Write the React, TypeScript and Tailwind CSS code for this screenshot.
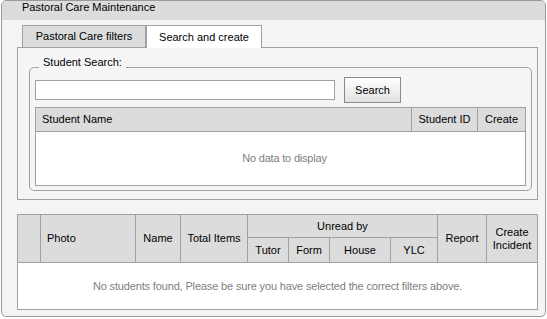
export default function App() {
  return (
    <div className="h-[319px] w-[547px] bg-white font-['Liberation_Sans',Arial,sans-serif] text-[11px] text-black">
      <div className="ml-px flex h-[317px] w-[545px] flex-col overflow-hidden rounded-[5px] border border-[#9a9a9a] bg-[#f4f4f4]">
        <div className="h-[19px] shrink-0 bg-[#dcdcdc] pl-[20px] leading-[13px]">Pastoral Care Maintenance</div>

        <div className="mt-[5px] flex items-end pl-[20px]">
          <div className="flex h-[22px] w-[124px] items-center justify-center border border-b-0 border-[#a0a0a0] bg-[#dcdcdc]">
            Pastoral Care filters
          </div>
          <div className="relative z-10 -mb-px flex h-[23px] w-[116px] items-center justify-center border border-b-0 border-[#a0a0a0] bg-white">
            Search and create
          </div>
        </div>

        <div className="ml-[15px] w-[521px] border border-[#a0a0a0] bg-[#f5f5f5] pb-[8px]">
          <fieldset className="ml-[11px] mt-[7px] w-[503px] rounded-[5px] border border-[#a0a0a0] px-[5px] pb-[4px]">
            <legend className="ml-[4px] px-[4px] pb-[10px] leading-[14px]">Student Search:</legend>
            <div className="-mt-[2px] flex items-center">
              <input
                type="text"
                className="h-[20px] w-[300px] border border-[#a0a0a0] bg-white px-1 outline-none"
              />
              <button
                type="button"
                className="ml-[9px] h-[26px] w-[57px] border border-[#8a8a8a] bg-gradient-to-b from-white to-[#e2e2e2] text-[11px]"
              >
                Search
              </button>
            </div>
            <div className="mt-[4px] w-[491px] border border-[#a0a0a0] bg-white">
              <div className="flex h-[24px] border-b border-[#a0a0a0] bg-[#dcdcdc]">
                <div className="flex w-[375px] items-center pl-[6px]">Student Name</div>
                <div className="flex w-[66px] items-center justify-center border-l border-[#a0a0a0]">Student ID</div>
                <div className="flex w-[48px] items-center justify-center border-l border-[#a0a0a0]">Create</div>
              </div>
              <div className="flex h-[53px] items-center justify-center pl-[8px] tracking-[-0.2px] text-[#808080]">
                No data to display
              </div>
            </div>
          </fieldset>
        </div>

        <div className="ml-[15px] mt-[14px] w-[521px] border border-[#a0a0a0] bg-white">
          <div className="flex h-[48px] border-b border-[#a0a0a0] bg-[#dcdcdc]">
            <div className="w-[22px]" />
            <div className="flex w-[95px] items-center border-l border-[#a0a0a0] pl-[6px]">Photo</div>
            <div className="flex w-[45px] items-center justify-center border-l border-[#a0a0a0]">Name</div>
            <div className="flex w-[67px] items-center justify-center border-l border-[#a0a0a0]">Total Items</div>
            <div className="flex w-[190px] flex-col border-l border-[#a0a0a0]">
              <div className="flex h-[22px] items-center justify-center">Unread by</div>
              <div className="flex h-[25px] border-t border-[#a0a0a0]">
                <div className="flex w-[40px] items-center justify-center">Tutor</div>
                <div className="flex w-[41px] items-center justify-center border-l border-[#a0a0a0]">Form</div>
                <div className="flex w-[61px] items-center justify-center border-l border-[#a0a0a0]">House</div>
                <div className="flex w-[47px] items-center justify-center border-l border-[#a0a0a0]">YLC</div>
              </div>
            </div>
            <div className="flex w-[49px] items-center justify-center border-l border-[#a0a0a0]">Report</div>
            <div className="flex w-[51px] items-center justify-center border-l border-[#a0a0a0] text-center leading-[13px]">
              Create
              <br />
              Incident
            </div>
          </div>
          <div className="flex h-[46px] items-center justify-center tracking-[-0.15px] text-[#808080]">
            No students found, Please be sure you have selected the correct filters above.
          </div>
        </div>
      </div>
    </div>
  );
}
